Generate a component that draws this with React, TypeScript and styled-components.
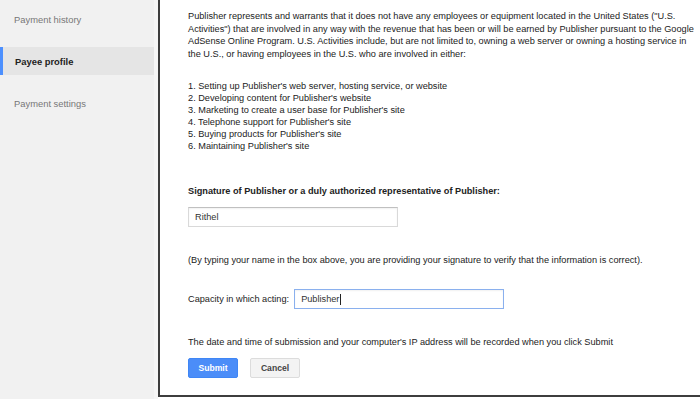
import styled, { createGlobalStyle } from 'styled-components'

const GlobalStyle = createGlobalStyle`
  html, body {
    margin: 0;
    padding: 0;
    background: #ffffff;
    overflow: hidden;
  }
  body {
    font-family: 'Liberation Sans', Arial, sans-serif;
  }
`

const Page = styled.div`
  display: flex;
  width: 700px;
  height: 399px;
  background: #ffffff;
`

const Sidebar = styled.nav`
  width: 154px;
  flex-shrink: 0;
  background: #f1f1f1;
  border-right: 4px solid #f6f6f6;
  padding-top: 5px;
  display: flex;
  flex-direction: column;
  gap: 14px;
`

const NavItem = styled.div<{ $active?: boolean }>`
  height: 28px;
  display: flex;
  align-items: center;
  padding-left: ${(p) => (p.$active ? '12px' : '14px')};
  border-left: ${(p) => (p.$active ? '3px solid #4d90fe' : 'none')};
  background: ${(p) => (p.$active ? '#e5e5e5' : 'transparent')};
  color: ${(p) => (p.$active ? '#222' : '#777')};
  font-weight: ${(p) => (p.$active ? 'bold' : 'normal')};
  font-size: 9.4px;
`

const Content = styled.main`
  flex: 1;
  height: 397px;
  box-sizing: border-box;
  border-left: 2px solid #3d3d3d;
  border-bottom: 2px solid #3d3d3d;
  padding: 10px 0 0 28px;
  color: #222;
  font-size: 9.2px;
  overflow: hidden;
`

const Paragraph = styled.p`
  margin: 0;
  line-height: 12.5px;
  width: 512px;
`

const List = styled.div`
  margin-top: 20px;
  line-height: 12px;
`

const Label = styled.div`
  margin-top: 33px;
  line-height: 12px;
  font-weight: bold;
`

const Field = styled.div<{ $focused?: boolean; $width: number }>`
  box-sizing: border-box;
  width: ${(p) => p.$width}px;
  height: 20px;
  display: flex;
  align-items: center;
  padding-left: 6px;
  border: 1px solid ${(p) => (p.$focused ? '#8ab0ee' : '#d9d9d9')};
  border-top-color: ${(p) => (p.$focused ? '#8ab0ee' : '#c0c0c0')};
  box-shadow: inset 0 1px 2px rgba(0, 0, 0, 0.06);
  color: #333;
  background: #fff;
`

const Caret = styled.span`
  display: inline-block;
  width: 1px;
  height: 11px;
  background: #222;
  margin-left: 1px;
`

const Note = styled.div<{ $top: number }>`
  margin-top: ${(p) => p.$top}px;
  line-height: 12px;
`

const FieldRow = styled.div`
  margin-top: 23px;
  display: flex;
  align-items: center;
  gap: 5px;
`

const Buttons = styled.div`
  margin-top: 10px;
  display: flex;
  gap: 12px;
`

const Button = styled.button<{ $primary?: boolean }>`
  width: 50px;
  height: 20px;
  padding: 0;
  border-radius: 2px;
  font-family: inherit;
  font-size: 8.6px;
  font-weight: bold;
  border: 1px solid ${(p) => (p.$primary ? '#3f86f5' : '#dcdcdc')};
  background: ${(p) => (p.$primary ? '#4b8df8' : '#f3f3f3')};
  color: ${(p) => (p.$primary ? '#fff' : '#444')};
`

const steps = [
  "Setting up Publisher's web server, hosting service, or website",
  "Developing content for Publisher's website",
  "Marketing to create a user base for Publisher's site",
  "Telephone support for Publisher's site",
  "Buying products for Publisher's site",
  "Maintaining Publisher's site",
]

const App = () => {
  return (
    <Page>
      <GlobalStyle />
      <Sidebar>
        <NavItem>Payment history</NavItem>
        <NavItem $active>Payee profile</NavItem>
        <NavItem>Payment settings</NavItem>
      </Sidebar>
      <Content>
        <Paragraph>
          Publisher represents and warrants that it does not have any employees or equipment located in the United
          States ("U.S. Activities") that are involved in any way with the revenue that has been or will be earned by
          Publisher pursuant to the Google AdSense Online Program. U.S. Activities include, but are not limited to,
          owning a web server or owning a hosting service in the U.S., or having employees in the U.S. who are
          involved in either:
        </Paragraph>
        <List>
          {steps.map((s, i) => (
            <div key={i}>
              {i + 1}. {s}
            </div>
          ))}
        </List>
        <Label>Signature of Publisher or a duly authorized representative of Publisher:</Label>
        <Field $width={210} style={{ marginTop: '10px' }}>
          Rithel
        </Field>
        <Note $top={27}>
          (By typing your name in the box above, you are providing your signature to verify that the information is
          correct).
        </Note>
        <FieldRow>
          <span>Capacity in which acting:</span>
          <Field $width={210} $focused>
            Publisher
            <Caret />
          </Field>
        </FieldRow>
        <Note $top={27}>
          The date and time of submission and your computer's IP address will be recorded when you click Submit
        </Note>
        <Buttons>
          <Button $primary>Submit</Button>
          <Button>Cancel</Button>
        </Buttons>
      </Content>
    </Page>
  )
}

export default App
